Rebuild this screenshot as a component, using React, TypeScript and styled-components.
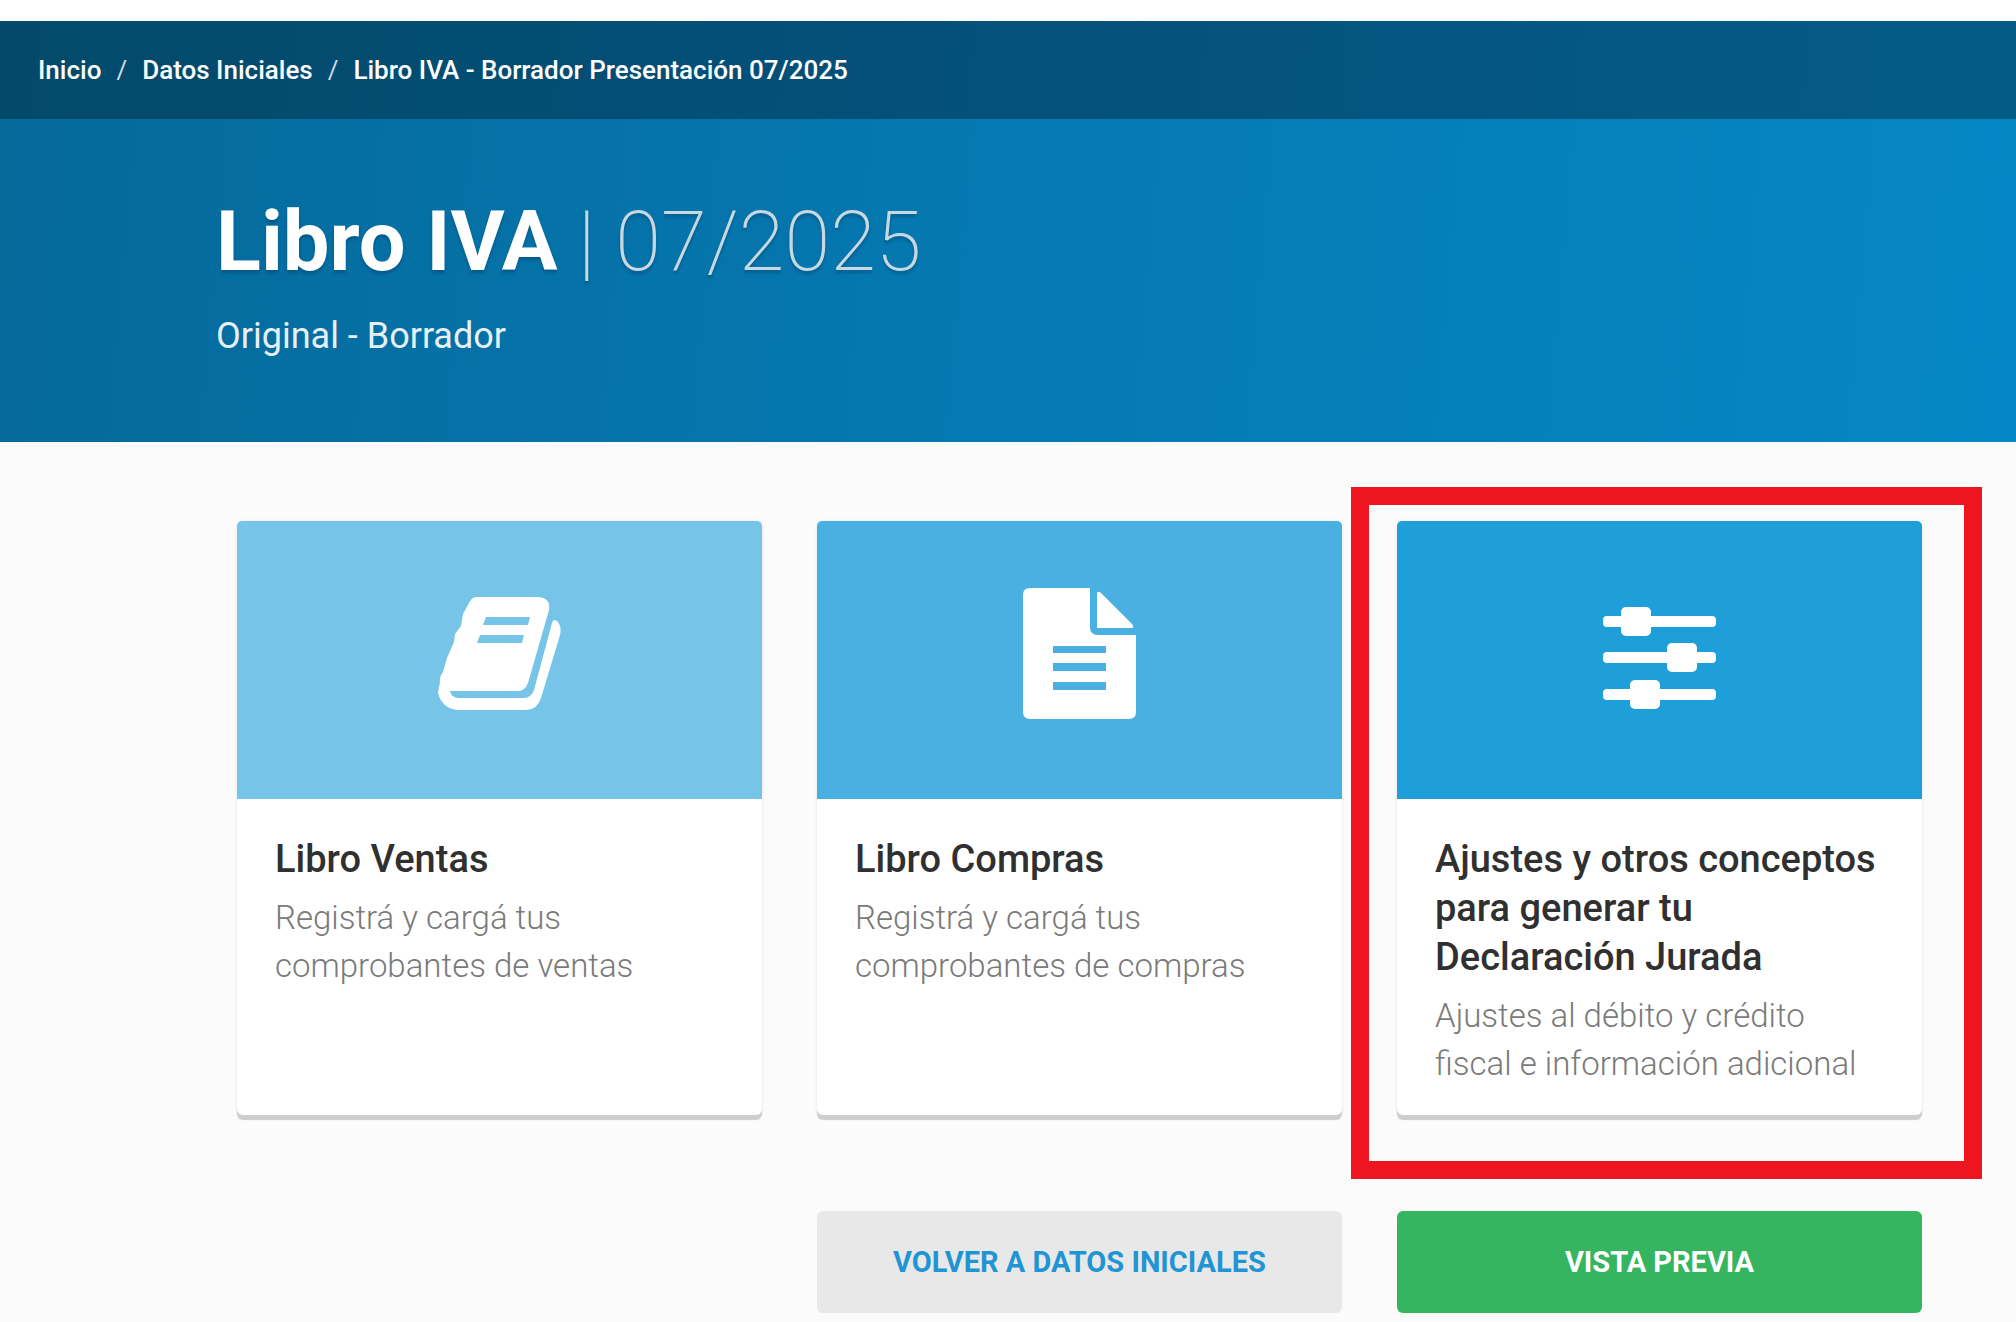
import React from "react";
import styled, { createGlobalStyle } from "styled-components";

const GlobalStyle = createGlobalStyle`
  *, *::before, *::after { box-sizing: border-box; }
  body {
    margin: 0;
    background: #fbfbfb;
    font-family: Roboto, "Liberation Sans", sans-serif;
  }
`;

const Header = styled.header`
  border-top: 21px solid #ffffff;
`;

const BreadcrumbBar = styled.nav`
  background: linear-gradient(95deg, #034a6a 0%, #04507a 45%, #045c86 100%);
`;

const BreadcrumbList = styled.ol`
  display: flex;
  align-items: center;
  gap: 15px;
  height: 98px;
  margin: 0;
  padding: 0 38px;
  list-style: none;
  font-size: 26px;
  line-height: 32px;
  font-weight: 500;
  color: #ffffff;
`;

const Crumb = styled.li`
  display: flex;
  gap: 15px;
  white-space: nowrap;

  & + &::before {
    content: "/";
    font-weight: 400;
    color: #c9dbe4;
  }
`;

const CrumbLink = styled.a`
  color: inherit;
  text-decoration: none;
`;

const Hero = styled.div`
  height: 323px;
  padding: 73px 216px 0;
  background: linear-gradient(95deg, #05699a 0%, #0578b0 45%, #0587c5 100%);
  color: #ffffff;
`;

const Title = styled.h1`
  margin: 0;
  font-size: 83px;
  line-height: 100px;
  font-weight: 700;
  text-shadow: 0 3px 3px rgba(0, 50, 90, 0.35);
`;

const Period = styled.span`
  font-weight: 200;
  color: #c8d8e0;
`;

const Subtitle = styled.p`
  margin: 20px 0 0;
  font-size: 36px;
  line-height: 48px;
  font-weight: 400;
  color: #e6f0f6;
`;

const Main = styled.main`
  padding: 79px 94px 9px 237px;
`;

const Grid = styled.div`
  display: grid;
  grid-template-columns: repeat(3, minmax(0, 1fr));
  gap: 96px 55px;
`;

const Card = styled.a<{ $marked?: boolean }>`
  position: relative;
  display: flex;
  flex-direction: column;
  border-radius: 6px;
  background: #ffffff;
  box-shadow: 0 5px 1px #cdcdcd, 0 0 4px rgba(0, 0, 0, 0.06);
  color: inherit;
  text-decoration: none;

  &::after {
    content: "";
    display: ${(p) => (p.$marked ? "block" : "none")};
    position: absolute;
    inset: -34px -60px -64px -46px;
    border: 18px solid #ee1520;
    pointer-events: none;
  }
`;

const CardCover = styled.div<{ $tone: string }>`
  display: flex;
  align-items: center;
  justify-content: center;
  height: 278px;
  padding-bottom: 14px;
  border-radius: 5px 5px 0 0;
  background: ${(p) => p.$tone};
  color: #ffffff;
`;

const CardBody = styled.div`
  padding: 36px 38px 27px;
`;

const CardTitle = styled.h2`
  margin: 0 0 10px;
  font-size: 38px;
  line-height: 49px;
  font-weight: 500;
  color: #303030;
`;

const CardText = styled.p`
  margin: 0;
  font-size: 33px;
  line-height: 48px;
  font-weight: 300;
  color: #7a7a7a;
`;

const Button = styled.button<{ $primary?: boolean }>`
  grid-column: ${(p) => (p.$primary ? 3 : 2)};
  height: 102px;
  border: 0;
  border-radius: 6px;
  background: ${(p) => (p.$primary ? "#35b55f" : "#e8e8e8")};
  color: ${(p) => (p.$primary ? "#ffffff" : "#1f95d3")};
  font-family: inherit;
  font-size: 29px;
  line-height: 36px;
  font-weight: 700;
  text-transform: uppercase;
  cursor: pointer;
`;

const BookIcon = () => (
  <svg width="123" height="114" viewBox="0 0 123 114" fill="currentColor" aria-hidden="true">
    <path
      fillRule="evenodd"
      d="M38 1H101Q113 2 111 14L90 87Q87 95 80 95H12Q13 101 20 102H86Q93 102 96 94L114 27Q115 22 119 25Q124 30 122 39L103 102Q99 114 88 114H19Q4 112 0 97L2 86Q1 81 5 76L9 62L16 46L17 38L23 30L25 18L31 7Q34 1 38 1ZM48 21H92L90 29H45ZM42 39H86L84 47H39Z"
    />
  </svg>
);

const FileIcon = () => (
  <svg width="113" height="131" viewBox="0 0 113 131" fill="currentColor" aria-hidden="true">
    <path
      fillRule="evenodd"
      d="M7 0H67V39Q67 47 75 47H113V124Q113 131 106 131H7Q0 131 0 124V7Q0 0 7 0ZM30 58V65H83V58ZM30 75V83H83V75ZM30 94V102H83V94Z"
    />
    <path d="M74 6Q74 2 78 5L109 36Q112 40 108 40H74Z" />
  </svg>
);

const SlidersIcon = () => (
  <svg width="113" height="113" viewBox="0 0 113 113" fill="currentColor" aria-hidden="true">
    <rect x="0" y="19" width="113" height="11" rx="4" />
    <rect x="0" y="55" width="113" height="11" rx="4" />
    <rect x="0" y="92" width="113" height="11" rx="4" />
    <rect x="18" y="10" width="30" height="29" rx="5" />
    <rect x="64" y="46" width="30" height="29" rx="5" />
    <rect x="27" y="83" width="30" height="29" rx="5" />
  </svg>
);

const cards = [
  {
    title: "Libro Ventas",
    text: "Registrá y cargá tus comprobantes de ventas",
    tone: "#77c4e9",
    icon: <BookIcon />,
  },
  {
    title: "Libro Compras",
    text: "Registrá y cargá tus comprobantes de compras",
    tone: "#4ab0e1",
    icon: <FileIcon />,
  },
  {
    title: "Ajustes y otros conceptos para generar tu Declaración Jurada",
    text: "Ajustes al débito y crédito fiscal e información adicional",
    tone: "#1f9fda",
    icon: <SlidersIcon />,
    marked: true,
  },
];

export default function App() {
  return (
    <>
      <GlobalStyle />
      <Header>
        <BreadcrumbBar aria-label="Ruta de navegación">
          <BreadcrumbList>
            <Crumb>
              <CrumbLink href="#inicio">Inicio</CrumbLink>
            </Crumb>
            <Crumb>
              <CrumbLink href="#datos">Datos Iniciales</CrumbLink>
            </Crumb>
            <Crumb>Libro IVA - Borrador Presentación 07/2025</Crumb>
          </BreadcrumbList>
        </BreadcrumbBar>
        <Hero>
          <Title>
            Libro IVA <Period>| 07/2025</Period>
          </Title>
          <Subtitle>Original - Borrador</Subtitle>
        </Hero>
      </Header>
      <Main>
        <Grid>
          {cards.map((card) => (
            <Card key={card.title} href="#" $marked={card.marked}>
              <CardCover $tone={card.tone}>{card.icon}</CardCover>
              <CardBody>
                <CardTitle>{card.title}</CardTitle>
                <CardText>{card.text}</CardText>
              </CardBody>
            </Card>
          ))}
          <Button type="button">Volver a Datos Iniciales</Button>
          <Button type="button" $primary>
            Vista previa
          </Button>
        </Grid>
      </Main>
    </>
  );
}
